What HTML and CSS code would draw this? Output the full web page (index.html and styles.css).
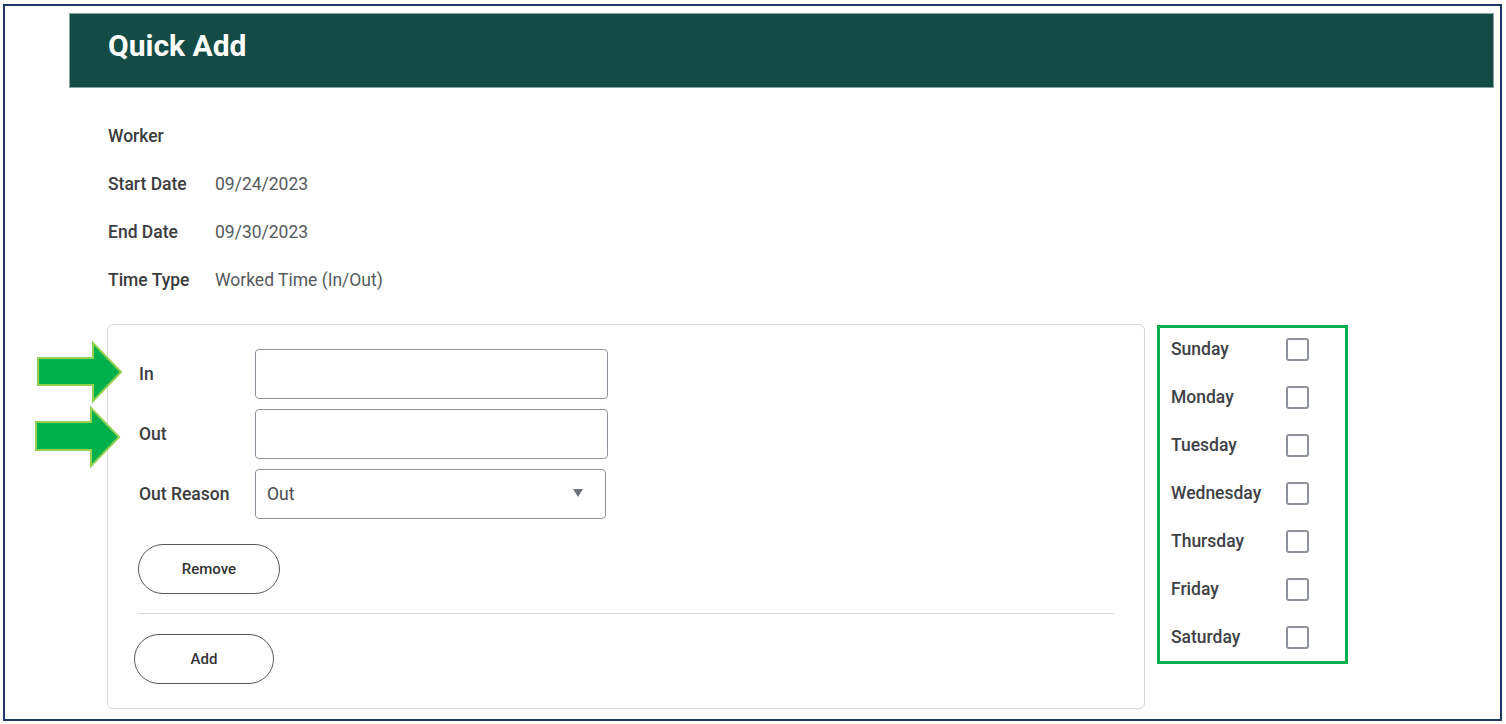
FILE: index.html
```html
<!DOCTYPE html>
<html lang="en">
<head>
<meta charset="utf-8">
<title>Quick Add</title>
<link rel="stylesheet" href="styles.css">
</head>
<body>
<div class="frame">
  <div class="header"><h1 class="title">Quick Add</h1></div>

  <div class="info">
    <div class="info-row"><span class="info-label">Worker</span><span class="info-value"></span></div>
    <div class="info-row"><span class="info-label">Start Date</span><span class="info-value">09/24/2023</span></div>
    <div class="info-row"><span class="info-label">End Date</span><span class="info-value">09/30/2023</span></div>
    <div class="info-row"><span class="info-label">Time Type</span><span class="info-value">Worked Time (In/Out)</span></div>
  </div>

  <div class="main">
    <div class="card">
      <div class="field">
        <span class="field-label">In</span>
        <div class="input"></div>
      </div>
      <div class="field">
        <span class="field-label">Out</span>
        <div class="input"></div>
      </div>
      <div class="field">
        <span class="field-label">Out Reason</span>
        <div class="select"><span class="select-text">Out</span><span class="caret"></span></div>
      </div>
      <button class="btn btn-remove">Remove</button>
      <div class="divider"></div>
      <button class="btn btn-add">Add</button>
    </div>

    <div class="days">
      <div class="day"><span class="day-label">Sunday</span><span class="check"></span></div>
      <div class="day"><span class="day-label">Monday</span><span class="check"></span></div>
      <div class="day"><span class="day-label">Tuesday</span><span class="check"></span></div>
      <div class="day"><span class="day-label">Wednesday</span><span class="check"></span></div>
      <div class="day"><span class="day-label">Thursday</span><span class="check"></span></div>
      <div class="day"><span class="day-label">Friday</span><span class="check"></span></div>
      <div class="day"><span class="day-label">Saturday</span><span class="check"></span></div>
    </div>
  </div>
</div>

<svg class="arrows" width="1506" height="724" viewBox="0 0 1506 724" aria-hidden="true">
  <polygon points="38,358 93,358 93,343 121,372 93,401 93,385 38,385" />
  <polygon points="36,422 91,422 91,408 119,437 91,466 91,450 36,450" />
</svg>
</body>
</html>
```

FILE: styles.css
```css
* { box-sizing: border-box; }

html, body {
  margin: 0;
  padding: 0;
  background: #ffffff;
  font-family: Roboto, "Liberation Sans", Arial, sans-serif;
}

body { position: relative; width: 1506px; height: 724px; overflow: hidden; }

.frame {
  margin: 4px 0 0 3px;
  width: 1499px;
  height: 717px;
  border: 2px solid #1f3864;
}

.header {
  margin: 7px 0 0 64px;
  width: 1425px;
  height: 75px;
  background: #144b45;
  border: 1px solid #8aa5a0;
  padding: 17px 0 0 38px;
}

.title {
  margin: 0;
  font-size: 30px;
  line-height: 30px;
  font-weight: 700;
  color: #ffffff;
}

.info {
  margin: 24px 0 0 103px;
}

.info-row {
  display: flex;
  height: 48px;
  line-height: 48px;
  font-size: 17.5px;
}

.info-label {
  width: 107px;
  font-weight: 500;
  color: #3c3c3e;
}

.info-value {
  color: #56595e;
}

.main {
  display: flex;
  align-items: flex-start;
  gap: 12px;
  margin: 20px 0 0 102px;
}

.card {
  width: 1038px;
  border: 1px solid #d6d9dd;
  border-radius: 6px;
  padding: 24px 30px;
}

.field {
  display: flex;
  align-items: center;
  height: 50px;
  margin-bottom: 10px;
}

.field:nth-of-type(3) { margin-bottom: 0; }

.field-label {
  width: 117px;
  padding-left: 1px;
  font-size: 17.5px;
  font-weight: 500;
  color: #3c3c3e;
}

.input {
  width: 353px;
  height: 50px;
  border: 1px solid #8e939b;
  border-radius: 4px;
}

.select {
  width: 351px;
  height: 50px;
  border: 1px solid #8e939b;
  border-radius: 4px;
  display: flex;
  align-items: center;
  justify-content: space-between;
  padding: 0 22px 0 11px;
}

.select-text {
  font-size: 17.5px;
  color: #46494e;
}

.caret {
  width: 0;
  height: 0;
  border-left: 5.5px solid transparent;
  border-right: 5.5px solid transparent;
  border-top: 8px solid #6b7079;
  margin-top: -2px;
}

.btn {
  display: block;
  height: 50px;
  border: 1px solid #55585c;
  border-radius: 25px;
  background: #ffffff;
  font-family: Roboto, "Liberation Sans", Arial, sans-serif;
  font-size: 15px;
  font-weight: 500;
  color: #333333;
  padding: 0;
}

.btn-remove {
  width: 142px;
  margin-top: 25px;
}

.divider {
  height: 1px;
  background: #d9dcdf;
  margin: 19px 0 20px 0;
}

.btn-add {
  width: 140px;
  margin-left: -4px;
}

.days {
  width: 191px;
  margin-top: 1px;
  border: 3px solid #00b050;
  padding: 1px 0 4px 11px;
  display: flex;
  flex-direction: column;
  gap: 8px;
}

.day {
  display: flex;
  align-items: center;
  height: 40px;
}

.day-label {
  width: 116px;
  font-size: 17.5px;
  font-weight: 500;
  color: #3e4147;
}

.check {
  width: 23px;
  height: 23px;
  border: 2px solid #8e939b;
  border-radius: 3px;
  margin-left: -1px;
}

.arrows {
  position: absolute;
  left: 0;
  top: 0;
  pointer-events: none;
}

.arrows polygon {
  fill: #00b04a;
  stroke: #92d050;
  stroke-width: 2;
  stroke-linejoin: miter;
}
```
